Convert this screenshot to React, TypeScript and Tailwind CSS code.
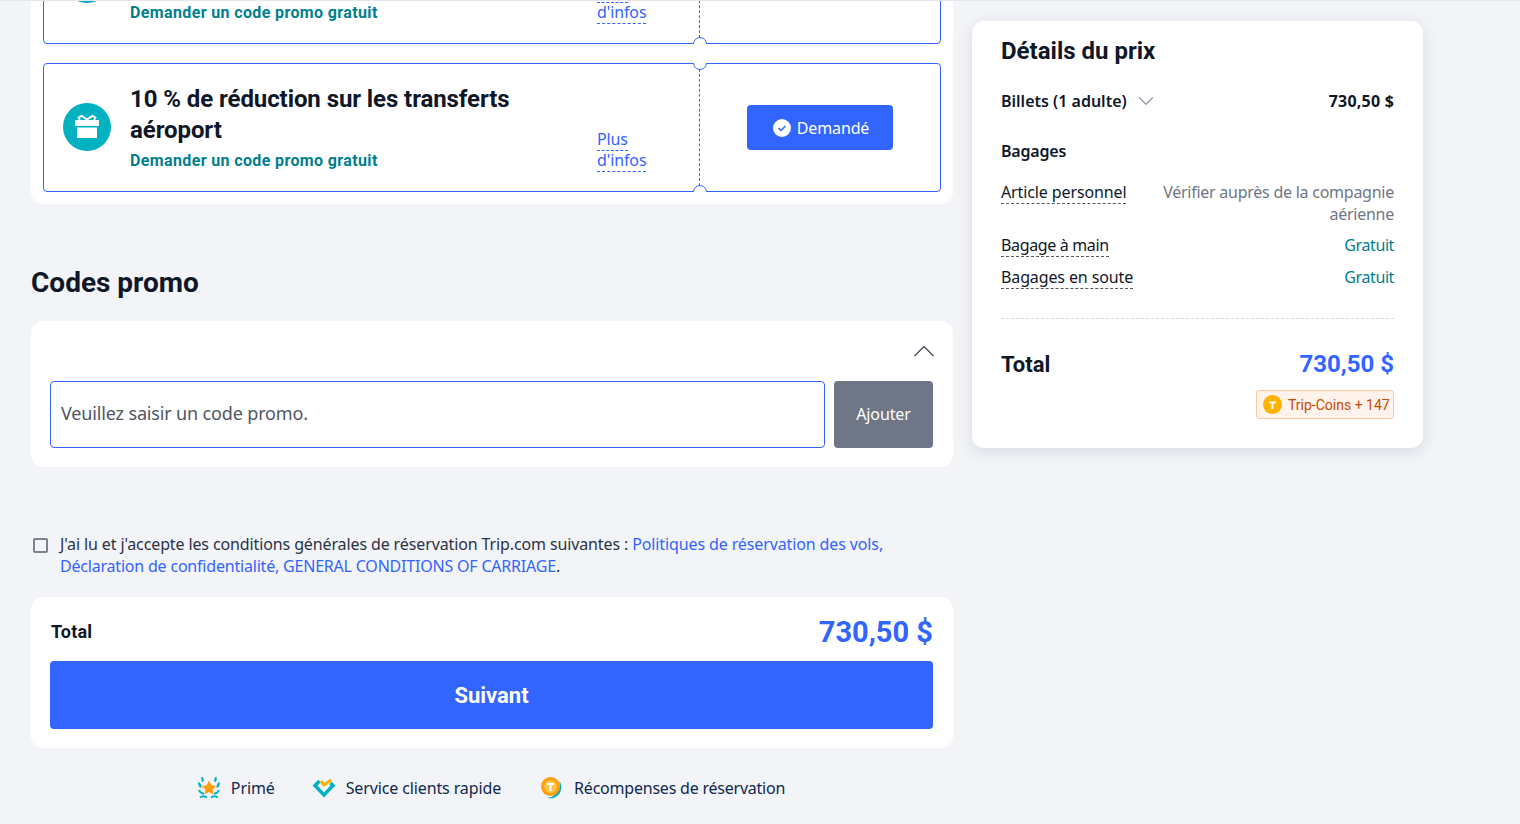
import { ChevronDown, ChevronUp } from "lucide-react";

const coupons = [
  { title: "" },
  { title: "10 % de réduction sur les transferts aéroport" },
];

function GiftIcon() {
  return (
    <svg width="48" height="48" viewBox="0 0 48 48" className="shrink-0 -mt-px">
      <circle cx="24" cy="24" r="24" fill="#00b1c2" />
      <rect x="12" y="17" width="24" height="6" rx="0.5" fill="#fff" />
      <rect x="14" y="24.5" width="20" height="10.5" fill="#fff" />
      <path d="M24 16.5l-5.5-3.600-3 1.600 1.400 2.400M24 16.500l5.500-3.600 3 1.600-1.400 2.400" fill="none" stroke="#fff" strokeWidth="1.8" />
    </svg>
  );
}

function Notch({ side }: { side: "top" | "bottom" }) {
  return (
    <div className={side === "top" ? "absolute -top-px right-[233px] w-[14px] h-[7px] overflow-hidden bg-white" : "absolute -bottom-px right-[233px] w-[14px] h-[7px] overflow-hidden bg-white"}>
      <div className={side === "top" ? "w-[14px] h-[14px] -mt-[7px] rounded-full border border-[#3264ff]" : "w-[14px] h-[14px] rounded-full border border-[#3264ff]"} />
    </div>
  );
}

function Coupon({ title }: { title: string }) {
  return (
    <div className="relative flex h-[129px] rounded border border-[#3264ff]">
      <div className="flex flex-1 items-center pl-[19px] border-r border-dashed border-[#3264ff]">
        <GiftIcon />
        <div className="ml-[19px] w-[467px] self-end pb-[15px] font-['Roboto',sans-serif] tracking-normal">
          {title && <div className="-mb-px w-[400px] text-[24px] leading-[31px] font-bold tracking-[-0.08px] text-[#0f1729]">{title}</div>}
          <div className="text-[16px] leading-[31px] font-bold tracking-[0.37px] text-[#00808c]">Demander un code promo gratuit</div>
        </div>
        <div className="w-[50px] self-end pb-[20px] text-[16px] leading-[21px] text-[#3264ff]">
          <span className="border-b border-dashed border-[#3264ff]">Plus d'infos</span>
        </div>
      </div>
      <div className="w-[240px] flex items-center justify-center">
        {title && (
          <button className="flex items-center justify-center gap-[6px] w-[146px] h-[45px] pl-[2px] rounded bg-[#3264ff] text-white text-[16px]">
            <svg width="18" height="18" viewBox="0 0 18 18">
              <circle cx="9" cy="9" r="9" fill="#fff" />
              <path d="M5.500 9l2.500 2.500 4.500-4.500" fill="none" stroke="#3264ff" strokeWidth="1.5" />
            </svg>
            Demandé
          </button>
        )}
      </div>
      <Notch side="top" />
      <Notch side="bottom" />
    </div>
  );
}

function PriceDetails() {
  return (
    <aside className="mt-[20px] w-[451px] h-[427px] shrink-0 rounded-xl bg-white px-[29px] pt-[14px] shadow-[0_4px_16px_rgba(15,41,77,0.12)] text-[#0f1729]">
      <h2 className="font-['Roboto',sans-serif] tracking-normal text-[24px] leading-[32px] font-bold">Détails du prix</h2>
      <div className="mt-[22px] flex items-center justify-between text-[16px] leading-[24px] font-semibold tracking-normal">
        <div className="flex items-center gap-[6px]">
          Billets (1 adulte)
          <ChevronDown size={26} strokeWidth={1} className="-my-1 text-[#8a90a0]" />
        </div>
        <span className="font-bold tracking-[0.2px]">730,50 $</span>
      </div>
      <div className="mt-[26px] text-[16px] leading-[24px] font-semibold tracking-[-0.2px]">Bagages</div>
      <div className="mt-[18px] flex items-start justify-between text-[16px] leading-[22px]">
        <span className="mt-px border-b border-dashed border-[#4f5666] leading-[21px]">Article personnel</span>
        <span className="w-[240px] text-right tracking-[-0.25px] text-[#6f7686]">Vérifier auprès de la compagnie aérienne</span>
      </div>
      <div className="mt-[10px] flex items-start justify-between text-[16px] leading-[22px]">
        <span className="border-b border-dashed border-[#4f5666] leading-[21px] tracking-[-0.35px]">Bagage à main</span>
        <span className="-mt-px tracking-[-0.4px] text-[#00808c]">Gratuit</span>
      </div>
      <div className="mt-[10px] flex items-start justify-between text-[16px] leading-[22px]">
        <span className="border-b border-dashed border-[#4f5666] leading-[21px]">Bagages en soute</span>
        <span className="-mt-px tracking-[-0.4px] text-[#00808c]">Gratuit</span>
      </div>
      <div className="mt-[29px] border-t border-dashed border-[#d5d8de]" />
      <div className="mt-[28px] flex items-center justify-between h-[34px] font-['Roboto',sans-serif] tracking-normal">
        <span className="text-[22px] font-bold">Total</span>
        <span className="text-[24px] font-bold text-[#3264ff]">730,50 $</span>
      </div>
      <div className="mt-[9px] flex justify-end">
        <div className="flex items-center gap-[6px] h-[29px] w-[138px] pl-[6px] pt-px whitespace-nowrap rounded-[3px] border border-[#ffc79e] bg-[#fff3eb] font-['Roboto',sans-serif] tracking-normal text-[14px] text-[#c94a00]">
          <svg width="19" height="19" viewBox="0 0 19 19" className="shrink-0 -mt-px">
            <circle cx="9.500" cy="9.500" r="9.500" fill="#ffb300" />
            <path d="M6 6.500h7v1.800h-2.500V14h-2V8.300H6z" fill="#fff" />
          </svg>
          Trip-Coins + 147
        </div>
      </div>
    </aside>
  );
}

export default function App() {
  return (
    <div className="h-[824px] overflow-hidden bg-[#f3f4f8] font-['Noto_Sans',sans-serif] tracking-[-0.12px]">
      <div className="relative z-10 h-px bg-[#e4e6ec]" />
      <main className="flex items-start gap-[19px] pl-[31px]">
        <div className="w-[922px] shrink-0 -mt-[98px]">
          <section className="flex flex-col gap-[19px] rounded-xl bg-white p-[12px]">
            {coupons.map((c, i) => (
              <Coupon key={i} title={c.title} />
            ))}
          </section>

          <h2 className="mt-[59px] font-['Roboto',sans-serif] tracking-normal text-[28px] leading-[40px] font-bold text-[#0f1729]">Codes promo</h2>

          <section className="mt-[18px] h-[146px] rounded-xl bg-white pl-[19px] pr-[20px]">
            <div className="flex h-[60px] items-center justify-end">
              <ChevronUp size={36} strokeWidth={1} className="-mr-[9px] text-[#4f5666]" />
            </div>
            <div className="flex gap-[9px]">
              <input
                placeholder="Veuillez saisir un code promo."
                className="h-[67px] flex-1 rounded border border-[#3264ff] px-[10px] pb-[4px] text-[18px] tracking-[-0.15px] placeholder:text-[#4f5666] outline-none"
              />
              <button className="w-[99px] h-[67px] rounded bg-[#6f7686] pb-[2px] text-[16px] text-white">Ajouter</button>
            </div>
          </section>

          <div className="mt-[66px] flex text-[16px] leading-[22px] text-[#2c3345]">
            <div className="mt-[5px] ml-[2px] h-[15px] w-[15px] shrink-0 rounded-[2px] border-2 border-[#7b8190]" />
            <p className="ml-[12px] w-[860px]">
              J'ai lu et j'accepte les conditions générales de réservation Trip.com suivantes :{" "}
              <span className="text-[#3264ff]">Politiques de réservation des vols, </span>
              <span className="tracking-[-0.2px] text-[#3264ff]">Déclaration de confidentialité, GENERAL CONDITIONS OF CARRIAGE</span>.
            </p>
          </div>

          <section className="mt-[20px] rounded-xl bg-white pl-[19px] pr-[20px] py-[19px]">
            <div className="flex h-[30px] items-center justify-between font-['Roboto',sans-serif] tracking-normal">
              <span className="ml-px text-[18px] font-bold tracking-[0.2px] text-[#0f1729]">Total</span>
              <span className="pt-[3px] text-[29px] font-bold text-[#3264ff]">730,50 $</span>
            </div>
            <button className="mt-[15px] h-[68px] w-full rounded bg-[#3264ff] font-['Roboto',sans-serif] tracking-normal text-[22px] font-bold text-white">Suivant</button>
          </section>

          <footer className="mt-[28px] flex h-[24px] items-center justify-center gap-[39px] pr-[2px] text-[16px] text-[#0f294d]">
            <div className="flex items-center gap-[10px]">
              <svg width="24" height="24" viewBox="0 0 24 24">
                <path d="M12 4.500l2.300 4.700 5 .7-3.700 3.500.9 5-4.500-2.400-4.500 2.400.9-5-3.700-3.500 5-.7z" fill="#ff9d0a" />
                <ellipse cx="2.800" cy="9" rx="1.300" ry="3" transform="rotate(-25 2.800 9)" fill="#00b1c2" />
                <ellipse cx="21.200" cy="9" rx="1.300" ry="3" transform="rotate(25 21.200 9)" fill="#00b1c2" />
                <ellipse cx="5.500" cy="3.500" rx="1.200" ry="2.700" transform="rotate(-15 5.500 3.500)" fill="#00b1c2" />
                <ellipse cx="18.500" cy="3.500" rx="1.200" ry="2.700" transform="rotate(15 18.500 3.500)" fill="#00b1c2" />
                <path d="M2 14c1 2.500 3 3.500 5 3.800M22 14c-1 2.500-3 3.500-5 3.800M3 21.500c2-1.500 5-1.500 7 0M14 21.500c2-1.500 5-1.500 7 0" fill="none" stroke="#00b1c2" strokeWidth="2" />
              </svg>
              Primé
            </div>
            <div className="-ml-[2px] flex items-center gap-[10px]">
              <svg width="24" height="24" viewBox="0 0 24 24">
                <path d="M7.500 5L3 9.500 12 19l9-9.500-2.500-2.500" fill="none" stroke="#00b1c2" strokeWidth="3.500" />
                <path d="M9 5l3 4 7-5" fill="none" stroke="#ffb300" strokeWidth="3" />
              </svg>
              Service clients rapide
            </div>
            <div className="flex items-center gap-[10px] tracking-[-0.22px]">
              <svg width="24" height="24" viewBox="0 0 24 24">
                <path d="M19.500 5C25 14 17 25 7 21.800 14 22 20.500 15 19.500 5z" fill="#00b1c2" />
                <circle cx="10.500" cy="10.500" r="9.500" fill="#ff9d0a" />
                <circle cx="10.500" cy="10.500" r="6.500" fill="#ffc24a" />
                <path d="M7 7h7v2h-2.500v6h-2V9H7z" fill="#fff" />
              </svg>
              Récompenses de réservation
            </div>
          </footer>
        </div>

        <PriceDetails />
      </main>
    </div>
  );
}
